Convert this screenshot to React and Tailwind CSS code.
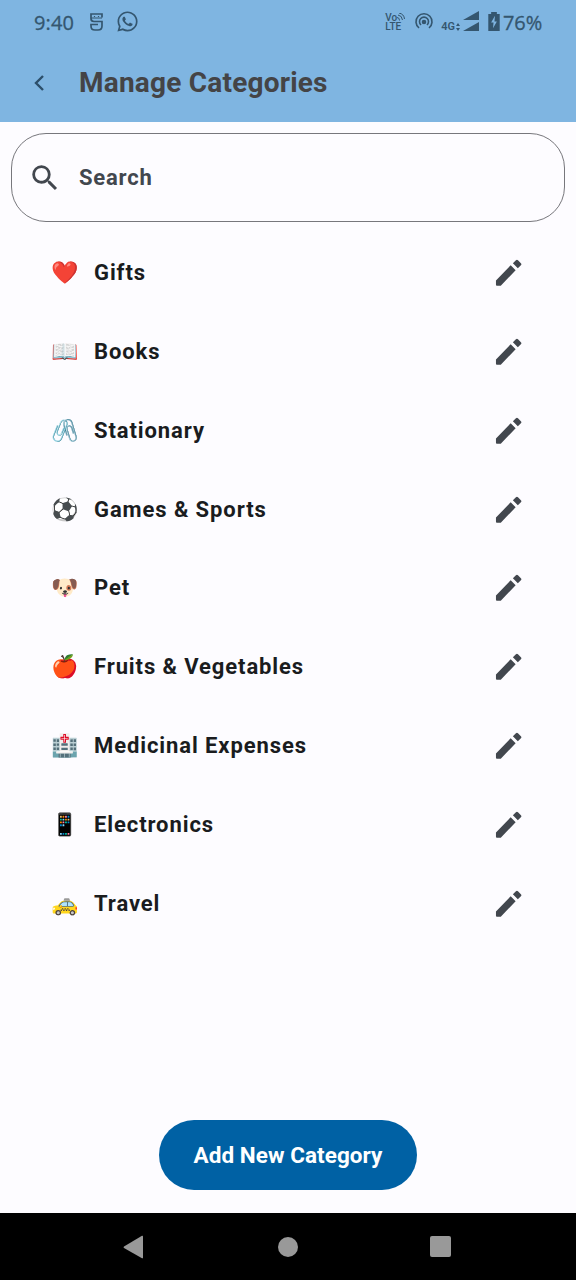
import { MdSearch } from "react-icons/md";
import { FaWhatsapp } from "react-icons/fa";

const categories = [
  ["❤️", "Gifts"],
  ["📖", "Books"],
  ["🖇️", "Stationary"],
  ["⚽", "Games & Sports"],
  ["🐶", "Pet"],
  ["🍎", "Fruits & Vegetables"],
  ["🏥", "Medicinal Expenses"],
  ["📱", "Electronics"],
  ["🚕", "Travel"],
];

function StatusBar() {
  return (
    <div className="flex h-[45px] items-center pl-[34px] pr-[33px] text-[#34566f]">
      <span className="w-[41px] whitespace-nowrap font-['Open_Sans','Noto_Sans',sans-serif] text-[20px] tracking-[0.1px] [-webkit-text-stroke:0.3px]">9:40</span>
      <svg className="ml-[15px] mt-[-1px] h-[18px] w-[13px]" viewBox="0 0 13 18" fill="none" stroke="currentColor" strokeWidth="1.700">
        <path d="M12 4.500V1H1v4.500q0 3 3 3h8V13q0 4-4 4H5q-4 0-4-4v-1.500h7" />
        <path strokeWidth="1.200" d="M1 5h11M4.500 3v1M8.500 3v1" />
      </svg>
      <FaWhatsapp className="ml-[13px] mt-[-2px] size-[23px]" />
      <div className="ml-auto flex items-center">
        <div className="relative mt-[-2px] w-[20px] font-['Roboto',sans-serif] text-[10px] font-medium leading-[9px]">
          <div>Vo</div>
          <div>LTE</div>
          <svg className="absolute left-[12px] top-0 size-[8px]" viewBox="0 0 8 8" fill="none" stroke="currentColor">
            <path d="M0 4.500q2.500 0 2.500 3M1 2q4 .5 4.500 5M2 0q5 1 5.500 6" />
          </svg>
        </div>
        <svg className="ml-[9px] mt-[-3px] size-[20px]" viewBox="0 0 20 20" fill="none" stroke="currentColor" strokeWidth="1.6">
          <circle cx="10" cy="11" r="1.500" fill="currentColor" />
          <path d="M5 17A8 8 0 1 1 15 17M7 14A4.500 4.500 0 1 1 13 14" />
        </svg>
        <span className="ml-[7px] mt-[7px] font-['Roboto',sans-serif] text-[11px] font-semibold leading-none">4G</span>
        <svg className="ml-[1px] mt-[-1px] h-[22px] w-[25px]" viewBox="0 0 25 22" fill="currentColor">
          <path d="M23 0v9H7zM23 11v9H7zM0 15l2-3 2 3zM0 17h4l-2 3z" />
        </svg>
        <svg className="ml-[7px] mt-[-3px] h-[19px] w-[12px]" viewBox="0 0 12 20">
          <path fill="currentColor" d="M3 0h6v2h3v18H0V2h3z" />
          <path fill="#7fb5e1" d="M7 4 3 11h2.500L5 17l4-7H6.500z" />
        </svg>
        <span className="ml-[3px] w-[40px] whitespace-nowrap font-['Open_Sans','Noto_Sans',sans-serif] text-[20px] tracking-[-0.1px] [-webkit-text-stroke:0.3px]">76%</span>
      </div>
    </div>
  );
}

function Pencil() {
  return (
    <svg className="ml-auto size-[35px] text-[#42474e]" viewBox="0 0 24 24" fill="currentColor">
      <path d="M3.400 17.500v2.900q0 .6.600.6h2.700L16.900 10.500l-3.400-3.400zM20.500 5.600l-2-2q-.7-.7-1.400 0l-2.100 2.100 3.400 3.400 2.100-2.100q.7-.7 0-1.400z" />
    </svg>
  );
}

export default function App() {
  return (
    <div className="flex h-[1280px] w-[576px] flex-col overflow-hidden bg-[#fdfcff] font-['Roboto',sans-serif]">
      <header className="h-[122px] shrink-0 bg-[#7fb5e1]">
        <StatusBar />
        <div className="flex h-[75px] items-center pl-[34px]">
          <svg className="h-[16px] w-[10px]" viewBox="0 0 10 16" fill="none" stroke="#2c4f6b" strokeWidth="2.400">
            <path d="M9 1 2 8l7 7" />
          </svg>
          <h1 className="ml-[35px] text-[28px] font-bold tracking-[0.21px] text-[#444446]">Manage Categories</h1>
        </div>
      </header>
      <div className="mx-[11px] mt-[11px] flex h-[89px] shrink-0 items-center rounded-[35px] border-[1.500px] border-[#77777c] pl-[16px]">
        <MdSearch className="size-[34px] text-[#42474e]" />
        <span className="ml-[17px] mt-[-1px] text-[22px] font-bold tracking-[0.8px] text-[#42474e]">Search</span>
      </div>
      <main className="flex flex-1 flex-col pt-[11px]">
        {categories.map(([emoji, name]) => (
          <div key={name} className="flex h-[78.860px] items-center pl-[51px] pr-[50px]">
            <span className="w-[43px] whitespace-nowrap font-['Noto_Color_Emoji',sans-serif] text-[22px]">{emoji}</span>
            <span className="text-[22px] font-bold tracking-[0.9px] text-[#1a1c1e]">{name}</span>
            <Pencil />
          </div>
        ))}
      </main>
      <button className="mb-[23px] h-[70px] w-[258px] shrink-0 self-center rounded-full bg-[#0061a4] pt-[2px] text-[22.5px] font-bold tracking-[0.05px] text-white">
        Add New Category
      </button>
      <nav className="flex h-[67px] shrink-0 items-center bg-black pl-[123px] text-[#999999]">
        <svg className="h-[24px] w-[21px]" viewBox="0 0 21 24" fill="currentColor">
          <path d="M19 .8q1-.5 1 .7v21q0 1.200-1 .7L1 13q-1-.8 0-1.600z" />
        </svg>
        <div className="ml-[134px] size-[20px] rounded-full bg-[#999999]" />
        <div className="ml-[132px] size-[21px] rounded-[2px] bg-[#999999]" />
      </nav>
    </div>
  );
}
